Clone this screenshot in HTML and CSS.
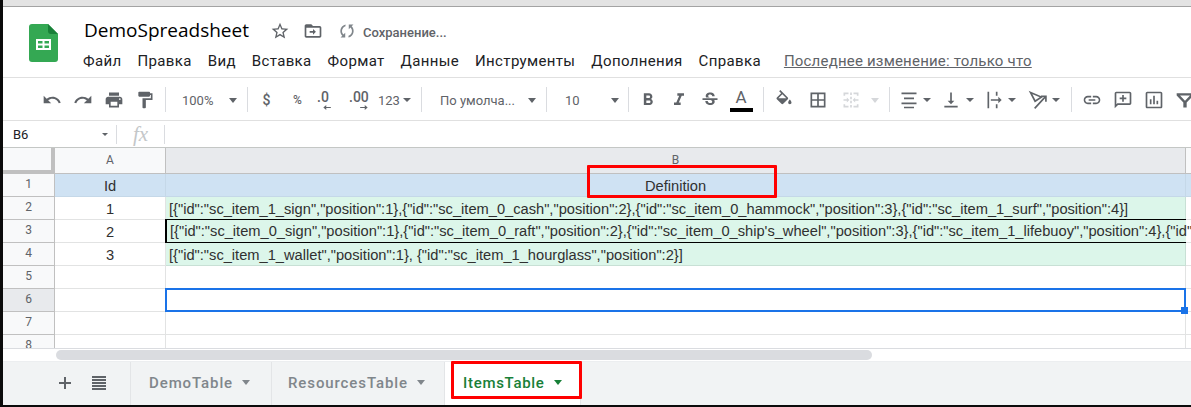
FILE: index.html
```html
<!DOCTYPE html>
<html lang="en">
<head>
    <meta charset="UTF-8">
    <meta name="viewport" content="width=device-width, initial-scale=1.0">
    <title>DemoSpreadsheet</title>
    <link rel="stylesheet" href="styles.css">
</head>
<body>

    <div id="app">
        <div id="topStrip"></div>

        <div id="header">
            <svg class="logo" viewBox="0 0 29 38">
                <path d="M3 0h16l10 10v25a3 3 0 0 1-3 3H3a3 3 0 0 1-3-3V3a3 3 0 0 1 3-3z" fill="#34a853"/>
                <path d="M19 0l10 10h-7a3 3 0 0 1-3-3z" fill="#188038"/>
                <path d="M7 15h15v11H7z M9 17v2.5h4.5V17z M15.500 17v2.500H20V17z M9 21.500V24h4.500v-2.500z M15.500 21.500V24H20v-2.500z" fill="#fff" fill-rule="evenodd"/>
            </svg>
            <div class="titleBlock">
                <div class="titleRow">
                    <span class="docName">DemoSpreadsheet</span>
                    <svg class="titleIcon star" viewBox="0 0 24 24"><path d="M22 9.240l-7.190-.62L12 2 9.190 8.630 2 9.240l5.460 4.730L5.820 21 12 17.270 18.180 21l-1.630-7.030L22 9.240zM12 15.400l-3.760 2.270 1-4.280-3.320-2.880 4.380-.38L12 6.100l1.710 4.040 4.380.38-3.320 2.880 1 4.280L12 15.400z"/></svg>
                    <svg class="titleIcon folder" viewBox="0 0 24 24"><path d="M20 6h-8l-2-2H4c-1.100 0-2 .9-2 2v12c0 1.100.9 2 2 2h16c1.100 0 2-.9 2-2V8c0-1.100-.9-2-2-2zm0 12H4V8h16v10z"/><path d="M12 9.500V12H8v2h4v2.500l3.500-3.500z"/></svg>
                    <svg class="titleIcon sync" viewBox="0 0 24 24"><path d="M12 4V1L8 5l4 4V6c3.310 0 6 2.690 6 6 0 1.010-.25 1.970-.7 2.800l1.460 1.460C19.540 15.030 20 13.570 20 12c0-4.420-3.580-8-8-8zm0 14c-3.310 0-6-2.690-6-6 0-1.010.25-1.970.7-2.800L5.240 7.740C4.460 8.970 4 10.430 4 12c0 4.420 3.580 8 8 8v3l4-4-4-4v3z"/></svg>
                    <span class="saving">Сохранение...</span>
                </div>
                <div class="menuRow">
                    <span>Файл</span>
                    <span>Правка</span>
                    <span>Вид</span>
                    <span>Вставка</span>
                    <span>Формат</span>
                    <span>Данные</span>
                    <span>Инструменты</span>
                    <span>Дополнения</span>
                    <span>Справка</span>
                    <a class="lastEdit">Последнее изменение: только что</a>
                </div>
            </div>
        </div>

        <div id="toolbar">
            <div class="tool w31"><svg viewBox="0 0 24 24"><path d="M12.500 8c-2.650 0-5.050.99-6.900 2.600L2 7v9h9l-3.620-3.620c1.390-1.160 3.160-1.880 5.120-1.880 3.540 0 6.550 2.310 7.600 5.500l2.370-.78C21.080 11.030 17.150 8 12.500 8z"/></svg></div>
            <div class="tool w31"><svg viewBox="0 0 24 24"><path d="M18.400 10.600C16.550 8.990 14.150 8 11.500 8c-4.650 0-8.580 3.030-9.960 7.220L3.900 16c1.050-3.190 4.050-5.500 7.600-5.500 1.950 0 3.730.72 5.120 1.880L13 16h9V7l-3.600 3.600z"/></svg></div>
            <div class="tool w31"><svg viewBox="0 0 24 24"><path d="M19 8H5c-1.660 0-3 1.340-3 3v6h4v4h12v-4h4v-6c0-1.660-1.340-3-3-3zm-3 11H8v-5h8v5zm3-7c-.55 0-1-.45-1-1s.45-1 1-1 1 .45 1 1-.45 1-1 1zm-1-9H6v4h12V3z"/></svg></div>
            <div class="tool w31"><svg viewBox="0 0 24 24"><path d="M18 4V3c0-.55-.45-1-1-1H5c-.55 0-1 .45-1 1v4c0 .55.45 1 1 1h12c.55 0 1-.45 1-1V6h1v4H9v11c0 .55.45 1 1 1h2c.55 0 1-.45 1-1v-9h8V4h-3z"/></svg></div>
            <div class="sep sepFirst"></div>

            <div class="tool drop zoomBox"><span>100%</span><i class="caret"></i></div>
            <div class="sep"></div>

            <div class="tool dollar txt">$</div>
            <div class="tool percent txt small">%</div>
            <div class="tool dec0 decimal"><b>.0</b><svg viewBox="0 0 10 6"><path d="M9 2.400H3.500V0L0 3l3.500 3V3.600H9z"/></svg></div>
            <div class="tool dec00 decimal"><b>.00</b><svg viewBox="0 0 10 6"><path d="M1 2.400h5.500V0L10 3 6.500 6V3.600H1z"/></svg></div>
            <div class="tool drop numFormat"><span>123</span><i class="caret small"></i></div>
            <div class="sep"></div>

            <div class="tool drop fontBox"><span>По умолча...</span><i class="caret"></i></div>
            <div class="sep"></div>

            <div class="tool drop sizeBox"><span>10</span><i class="caret"></i></div>
            <div class="sep"></div>

            <div class="tool w31 afterSep3"><svg viewBox="0 0 24 24"><path d="M15.600 10.790c.97-.67 1.650-1.770 1.650-2.790 0-2.260-1.750-4-4-4H7v14h7.040c2.090 0 3.710-1.700 3.710-3.790 0-1.520-.86-2.820-2.150-3.420zM10 6.500h3c.83 0 1.500.67 1.500 1.500s-.67 1.500-1.500 1.500h-3v-3zm3.500 9H10v-3h3.500c.83 0 1.500.67 1.500 1.500s-.67 1.500-1.500 1.500z"/></svg></div>
            <div class="tool w31"><svg viewBox="0 0 24 24"><path d="M10 4v3h2.210l-3.420 8H6v3h8v-3h-2.210l3.420-8H18V4z"/></svg></div>
            <div class="tool w31"><svg viewBox="0 0 24 24"><path d="M7.240 8.750c-.26-.48-.39-1.030-.39-1.670 0-.61.13-1.160.4-1.670.26-.5.63-.93 1.110-1.290.48-.35 1.050-.63 1.700-.83.66-.19 1.390-.29 2.180-.29.81 0 1.540.11 2.210.34.66.22 1.230.54 1.690.94.47.4.83.88 1.080 1.430.25.55.38 1.150.38 1.810h-3.010c0-.31-.05-.59-.15-.85-.09-.27-.24-.49-.44-.68-.2-.19-.45-.33-.75-.44-.3-.1-.66-.16-1.060-.16-.39 0-.74.04-1.030.13-.29.09-.53.21-.72.36-.19.16-.34.34-.44.55-.1.21-.15.43-.15.66 0 .48.25.88.74 1.210.38.25.77.48 1.410.7H7.390c-.05-.08-.11-.17-.15-.25zM21 12v-2H3v2h9.620c.18.07.4.14.55.2.37.17.66.34.87.51.21.17.35.36.43.57.07.2.11.43.11.69 0 .23-.05.45-.14.66-.09.2-.23.38-.42.53-.19.15-.42.26-.71.35-.29.08-.63.13-1.010.13-.43 0-.83-.04-1.180-.13s-.66-.23-.91-.42c-.25-.19-.45-.44-.59-.75-.14-.31-.25-.76-.25-1.210H6.400c0 .55.08 1.130.24 1.580.16.45.37.85.65 1.210.28.35.6.66.98.92.37.26.78.48 1.220.65.44.17.9.3 1.380.39.48.08.96.13 1.440.13.8 0 1.530-.09 2.180-.28s1.210-.45 1.670-.79c.46-.34.82-.77 1.070-1.270s.38-1.070.38-1.710c0-.6-.1-1.140-.31-1.610-.05-.11-.11-.23-.17-.33H21z"/></svg></div>
            <div class="tool w31 textColor"><span>A</span><i class="colorBar"></i></div>
            <div class="sep sepColor"></div>

            <div class="tool w31 afterSep"><svg viewBox="0 0 24 24"><path d="M16.560 8.940L7.620 0 6.210 1.410l2.380 2.380-5.150 5.150c-.59.59-.59 1.540 0 2.120l5.500 5.500c.29.29.68.44 1.060.44s.77-.15 1.060-.44l5.500-5.500c.59-.58.59-1.530 0-2.120zM5.210 10L10 5.210 14.790 10H5.210zM19 11.500s-2 2.170-2 3.500c0 1.100.9 2 2 2s2-.9 2-2c0-1.330-2-3.500-2-3.500z"/></svg></div>
            <div class="tool w36"><svg viewBox="0 0 24 24"><path d="M3 3v18h18V3H3zm8 16H5v-6h6v6zm0-8H5V5h6v6zm8 8h-6v-6h6v6zm0-8h-6V5h6v6z"/></svg></div>
            <div class="tool w31 disabled"><svg viewBox="0 0 24 24"><path d="M3 3h6v2H5v2H3zM15 3h6v4h-2V5h-4zM3 17h2v2h4v2H3zM19 17h2v4h-6v-2h4zM11 3h2v3h-2zM11 8h2v3h-2zM11 13h2v3h-2zM11 18h2v3h-2zM3 11h4V9l3 3-3 3v-2H3zM21 11h-4V9l-3 3 3 3v-2h4z"/></svg></div>
            <div class="tool dropIcon disabled"><i class="caret"></i></div>
            <div class="sep"></div>

            <div class="tool iconDrop alignH"><svg viewBox="0 0 24 24"><path d="M3 3h18v2H3zM6 9h12v2H6zM3 15h18v2H3zM6 20h12v2H6z"/></svg><i class="caret small"></i></div>
            <div class="tool iconDrop alignV"><svg viewBox="0 0 24 24"><path d="M16 13h-3V3h-2v10H8l4 4 4-4zM4 19v2h16v-2H4z"/></svg><i class="caret small"></i></div>
            <div class="tool iconDrop wrap"><svg viewBox="0 0 24 24"><path d="M3 2h2v20H3zM13 2h2v5h-2zM13 17h2v5h-2zM7 11h9V8l4 4-4 4v-3H7z"/></svg><i class="caret small"></i></div>
            <div class="tool iconDrop rotate"><svg class="strokeIcon" viewBox="0 0 24 24"><path d="M3 3l13 5.500-7.500 5z"/><path d="M8 22L21 8M15.500 7.500H21.500V14"/></svg><i class="caret small"></i></div>
            <div class="sep"></div>

            <div class="tool w31 afterSep"><svg viewBox="0 0 24 24"><path d="M3.900 12c0-1.710 1.390-3.100 3.100-3.100h4V7H7c-2.760 0-5 2.240-5 5s2.240 5 5 5h4v-1.900H7c-1.710 0-3.100-1.390-3.100-3.100zM8 13h8v-2H8v2zm9-6h-4v1.900h4c1.710 0 3.100 1.390 3.100 3.100s-1.390 3.100-3.100 3.100h-4V17h4c2.760 0 5-2.240 5-5s-2.240-5-5-5z"/></svg></div>
            <div class="tool w31"><svg viewBox="0 0 24 24"><path d="M20 2H4c-1.100 0-2 .9-2 2v18l4-4h14c1.100 0 2-.9 2-2V4c0-1.100-.9-2-2-2zm0 14H5.200L4 17.200V4h16v12z"/><path d="M11 6h2v3h3v2h-3v3h-2v-3H8V9h3z"/></svg></div>
            <div class="tool w31"><svg viewBox="0 0 24 24"><path d="M20 2H4c-1.100 0-2 .9-2 2v16c0 1.100.9 2 2 2h16c1.100 0 2-.9 2-2V4c0-1.100-.9-2-2-2zm0 18H4V4h16v16z"/><path d="M7 11h2v6H7zM11 7h2v10h-2zM15 13h2v4h-2z"/></svg></div>
            <div class="tool w31"><svg viewBox="0 0 24 24"><path d="M2 4h20v2.500L14 15v6h-4v-6L2 6.500zM6 6.500l6 6.300 6-6.300z" fill-rule="evenodd"/></svg></div>
        </div>

        <div id="formulaBar">
            <div class="cellRef"><span>B6</span><i class="caret tiny"></i></div>
            <div class="fx">fx</div>
            <div class="formulaInput"></div>
        </div>

        <div id="sheet">
            <div class="row headRow">
                <div class="rowHead corner"></div>
                <div class="colA colHead">A</div>
                <div class="colB colHead active">B</div>
                <div class="colC colHead"></div>
            </div>
            <div class="row blue">
                <div class="rowHead">1</div>
                <div class="colA center">Id</div>
                <div class="colB center">Definition</div>
                <div class="colC"></div>
            </div>
            <div class="row">
                <div class="rowHead">2</div>
                <div class="colA center">1</div>
                <div class="colB green">[{"id":"sc_item_1_sign","position":1},{"id":"sc_item_0_cash","position":2},{"id":"sc_item_0_hammock","position":3},{"id":"sc_item_1_surf","position":4}]</div>
                <div class="colC"></div>
            </div>
            <div class="row">
                <div class="rowHead">3</div>
                <div class="colA center">2</div>
                <div class="colB green outlined">[{"id":"sc_item_0_sign","position":1},{"id":"sc_item_0_raft","position":2},{"id":"sc_item_0_ship's_wheel","position":3},{"id":"sc_item_1_lifebuoy","position":4},{"id"</div>
                <div class="colC"></div>
            </div>
            <div class="row">
                <div class="rowHead">4</div>
                <div class="colA center">3</div>
                <div class="colB green">[{"id":"sc_item_1_wallet","position":1}, {"id":"sc_item_1_hourglass","position":2}]</div>
                <div class="colC"></div>
            </div>
            <div class="row">
                <div class="rowHead">5</div>
                <div class="colA"></div>
                <div class="colB"></div>
                <div class="colC"></div>
            </div>
            <div class="row">
                <div class="rowHead active">6</div>
                <div class="colA"></div>
                <div class="colB selected"><i class="handle"></i></div>
                <div class="colC"></div>
            </div>
            <div class="row">
                <div class="rowHead">7</div>
                <div class="colA"></div>
                <div class="colB"></div>
                <div class="colC"></div>
            </div>
            <div class="row partial">
                <div class="rowHead">8</div>
                <div class="colA"></div>
                <div class="colB"></div>
                <div class="colC"></div>
            </div>
        </div>

        <div id="scrollBar"><div class="thumb"></div></div>

        <div id="tabs">
            <div class="tabTools">
                <svg class="plus" viewBox="0 0 14 14"><path d="M6 1h2v5h5v2H8v5H6V8H1V6h5z"/></svg>
                <svg class="list" viewBox="0 0 14 14"><path d="M0 0h14v2H0zM0 3h14v2H0zM0 6h14v2H0zM0 9h14v2H0zM0 12h14v2H0z"/></svg>
            </div>
            <div class="tab w141"><span>DemoTable</span><i class="caret"></i></div>
            <div class="tab w173"><span>ResourcesTable</span><i class="caret"></i></div>
            <div class="tab activeTab"><span>ItemsTable</span><i class="caret"></i></div>
        </div>
    </div>

    <!-- red marks drawn over the screenshot -->
    <div class="mark markDefinition"></div>
    <div class="mark markTab"></div>

</body>
</html>
```

FILE: styles.css
```css
body {
    margin: 0;
    background-color: #0b0b0b;
    font-family: Roboto, "Liberation Sans", sans-serif;
    overflow: hidden;
}
#app {
    width: 1188px;
    height: 405px;
    margin-left: 3px;
    background-color: #fff;
    display: flex;
    flex-direction: column;
    overflow: hidden;
}
#topStrip {
    height: 6px;
    flex: none;
    background-color: #e3e3e3;
    border-bottom: 1px solid #a3a3a3;
}

/* header */
#header {
    height: 71px;
    flex: none;
    display: flex;
    box-sizing: border-box;
    border-bottom: 1px solid #e0e0e0;
}
.logo {
    width: 29px;
    height: 38px;
    margin: 17px 0 0 26px;
}
.titleBlock {
    margin-left: 26px;
}
.titleRow {
    display: flex;
    align-items: center;
    height: 30px;
    margin-top: 9px;
}
.docName {
    font-family: "Open Sans", sans-serif;
    font-size: 19px;
    color: #000;
    width: 166px;
    margin-top: -2px;
    white-space: nowrap;
}
.titleIcon {
    fill: #5f6368;
}
.star {
    width: 20px;
    height: 20px;
    margin-left: 20px;
}
.folder {
    width: 20px;
    height: 20px;
    margin-left: 13px;
}
.sync {
    width: 20px;
    height: 20px;
    margin-left: 14px;
    fill: #80868b;
    transform: rotate(45deg);
}
.saving {
    font-size: 13px;
    color: #5f6368;
    margin: 2px 0 0 6px;
    font-weight: 500;
}
.menuRow {
    display: flex;
    gap: 16px;
    font-size: 15px;
    letter-spacing: 0.35px;
    color: #202124;
    margin-top: 6px;
    margin-left: -1px;
    white-space: nowrap;
}
.lastEdit {
    color: #5f6368;
    text-decoration: underline;
    letter-spacing: 0.2px;
    margin-left: 7px;
}

/* toolbar */
#toolbar {
    height: 43px;
    flex: none;
    display: flex;
    align-items: center;
    padding-left: 33px;
    box-sizing: border-box;
    border-bottom: 1px solid #e0e0e0;
    color: #5f6368;
}
.tool {
    flex: none;
    height: 26px;
    margin-top: 2px;
    display: flex;
    align-items: center;
    justify-content: center;
    font-size: 13px;
}
.tool svg {
    width: 20px;
    height: 20px;
    fill: #5f6368;
}
.tool svg.strokeIcon {
    fill: none;
    stroke: #5f6368;
    stroke-width: 2;
}
.w31 { width: 31px; }
.w36 { width: 36px; }
.sep {
    width: 1px;
    height: 25px;
    flex: none;
    background-color: #dadce0;
    margin-left: 4px;
}
.sepFirst {
    margin-left: 5px;
}
.sepColor {
    margin-left: 6.5px;
}
.afterSep {
    margin-left: 4.5px;
}
.afterSep3 {
    margin-left: 3.5px;
}
.caret {
    display: block;
    flex: none;
    width: 0;
    height: 0;
    border-left: 4.5px solid transparent;
    border-right: 4.5px solid transparent;
    border-top: 5px solid #5f6368;
}
.caret.small {
    border-left-width: 4px;
    border-right-width: 4px;
    border-top-width: 4px;
}
.caret.tiny {
    border-left-width: 3px;
    border-right-width: 3px;
    border-top-width: 3px;
}
.drop {
    justify-content: space-between;
    box-sizing: border-box;
}
.zoomBox {
    width: 77px;
    padding: 0 6px 0 16px;
}
.dollar { width: 37px; }
.percent { width: 25px; }
.dec0 { width: 28px; }
.dec00 { width: 40px; }
.numFormat {
    width: 39px;
    padding-right: 6px;
}
.fontBox {
    width: 120px;
    padding: 0 6px 0 18px;
}
.sizeBox {
    width: 77px;
    padding: 0 5.5px 0 18px;
}
.txt {
    font-size: 14px;
    font-weight: 500;
}
.small {
    font-size: 12px;
}
.decimal {
    flex-direction: column;
    align-items: flex-start;
    line-height: 13px;
}
.decimal b {
    font-weight: 500;
    font-size: 14px;
}
.decimal svg {
    width: 9px;
    height: 5px;
    margin-top: 1px;
}
.dec0 b { margin-left: 7px; }
.dec0 svg { margin-left: 13px; }
.dec00 b { margin-left: 11px; }
.dec00 svg { margin-left: 21px; }
.textColor {
    flex-direction: column;
}
.textColor span {
    font-size: 17px;
    line-height: 19px;
}
.colorBar {
    display: block;
    width: 23px;
    height: 4px;
    background-color: #000;
    margin-top: 1px;
}
.disabled svg {
    fill: #d5d7da;
}
.disabled .caret {
    border-top-color: #d5d7da;
}
.dropIcon {
    width: 18.5px;
    justify-content: flex-start;
    padding-left: 4px;
    box-sizing: border-box;
}
.iconDrop {
    justify-content: flex-start;
    box-sizing: border-box;
}
.alignH {
    width: 51px;
    padding-left: 9px;
    gap: 3.7px;
}
.alignV {
    width: 44px;
    gap: 5px;
}
.wrap {
    width: 43px;
    gap: 3px;
}
.rotate {
    width: 38.7px;
    gap: 4px;
}

/* formula bar */
#formulaBar {
    height: 27px;
    flex: none;
    display: flex;
    align-items: center;
    box-sizing: border-box;
    border-bottom: 1px solid #c4c7c5;
}
.cellRef {
    width: 114px;
    height: 19px;
    display: flex;
    align-items: center;
    justify-content: space-between;
    box-sizing: border-box;
    padding: 0 8px 0 10px;
    font-size: 13px;
    color: #202124;
    border-right: 1px solid #dadce0;
}
.fx {
    width: 48px;
    height: 19px;
    line-height: 19px;
    text-align: center;
    box-sizing: border-box;
    font-family: "Liberation Serif", serif;
    font-style: italic;
    font-size: 21px;
    color: #c4c7c9;
    border-right: 1px solid #dadce0;
}
.formulaInput {
    flex: 1;
}

/* sheet */
#sheet {
    height: 201px;
    flex: none;
    overflow: hidden;
    border-bottom: 1px solid #dadce0;
    box-sizing: border-box;
    font-family: "Liberation Sans", Arial, sans-serif;
    font-size: 14.67px;
    color: #303030;
}
.row {
    display: flex;
    height: 23px;
    box-sizing: border-box;
}
.row > div {
    box-sizing: border-box;
    border-bottom: 1px solid #e2e3e3;
    border-right: 1px solid #e2e3e3;
    white-space: nowrap;
    overflow: hidden;
    line-height: 24px;
}
.headRow {
    height: 26px;
}
.row.headRow > div {
    line-height: 25px;
    border-bottom: 1px solid #c0c0c0;
    border-right: 1px solid #c0c0c0;
}
.partial {
    height: 15px;
}
.rowHead {
    width: 52px;
    flex: none;
    text-align: center;
    background-color: #f8f9fa;
    font-family: Roboto, sans-serif;
    font-size: 12px;
    color: #5f6368;
}
.row > .rowHead {
    border-right: 1px solid #c0c0c0;
    border-bottom: 1px solid #c0c0c0;
    line-height: 20px;
}
.row > .rowHead.active {
    background-color: #e8eaed;
}
.row.headRow > .corner {
    border-right: 4px solid #c0c0c0;
    border-bottom: 4px solid #c0c0c0;
}
.colA {
    width: 111px;
    flex: none;
}
.colB {
    width: 1020px;
    flex: none;
    padding-left: 3px;
    position: relative;
}
.colC {
    flex: 1;
}
.colHead {
    text-align: center;
    padding-left: 0;
    background-color: #f8f9fa;
    font-family: Roboto, sans-serif;
    font-size: 12px;
    color: #5f6368;
}
.colHead.active {
    background-color: #e8eaed;
}
.center {
    text-align: center;
}
.row.blue > div:not(.rowHead) {
    background-color: #cfe2f3;
    border-right-color: #c5d8e8;
    border-bottom-color: #c5d8e8;
    padding-left: 0;
}
.row > .colC,
.row.headRow > .colC,
.row.blue > .colC {
    border-right: 0;
}
.row > .green {
    background-color: #dcf6ea;
    border-bottom-color: #c8e0d5;
    border-right-color: #c8e0d5;
}
/* the long value spills past its cell, up to the window edge */
.row > .outlined {
    border-left: 2px solid #000;
    border-top: 1px solid #000;
    border-bottom: 1px solid #000;
    border-right: 0;
    padding-left: 3px;
    margin-top: -1px;
    height: 24px;
    margin-left: -1px;
    width: 1021px;
    line-height: 22px;
    overflow: visible;
}
.row > .selected {
    overflow: visible;
    margin: -1px 0 0 -1px;
    width: 1021px;
    height: 24px;
    border: 2px solid #1a73e8;
    z-index: 1;
}
.handle {
    position: absolute;
    right: -4px;
    bottom: -4px;
    width: 7px;
    height: 7px;
    background-color: #1a73e8;
}
#scrollBar {
    height: 13px;
    flex: none;
    padding: 1px 0 0 53px;
    box-sizing: border-box;
    border-bottom: 1px solid #eceef0;
}
.thumb {
    width: 816px;
    height: 10px;
    background-color: #dadce0;
    border-radius: 5px;
}

/* sheet tabs */
#tabs {
    flex: 1;
    display: flex;
    background-color: #f1f3f4;
    font-size: 15px;
    font-weight: 500;
    letter-spacing: 0.9px;
    color: #80868b;
}
.tabTools {
    width: 128px;
    display: flex;
    align-items: center;
    box-sizing: border-box;
    padding: 0 0 2px 55px;
    border-right: 1px solid #e3e5e7;
}
.tabTools svg {
    fill: #5f6368;
}
.plus {
    width: 14px;
    height: 14px;
}
.list {
    width: 14px;
    height: 14px;
    margin-left: 20px;
}
.tab {
    display: flex;
    align-items: center;
    box-sizing: border-box;
    padding: 0 0 2px 18px;
    gap: 9px;
    border-right: 1px solid #e3e5e7;
}
.tab .caret {
    border-left-width: 4px;
    border-right-width: 4px;
    border-top-width: 5px;
    border-top-color: #80868b;
}
.w141 { width: 141px; }
.w173 {
    width: 173px;
    padding-left: 16px;
}
.activeTab {
    width: 136px;
    background-color: #fff;
    color: #188038;
    letter-spacing: 0.7px;
}
.activeTab .caret {
    border-top-color: #188038;
}

/* annotation rectangles */
.mark {
    position: absolute;
    box-sizing: border-box;
    border: 3px solid #f00;
    border-radius: 1px;
}
.markDefinition {
    left: 587px;
    top: 165px;
    width: 190px;
    height: 33px;
}
.markTab {
    left: 451px;
    top: 361px;
    width: 131px;
    height: 38px;
}
```
